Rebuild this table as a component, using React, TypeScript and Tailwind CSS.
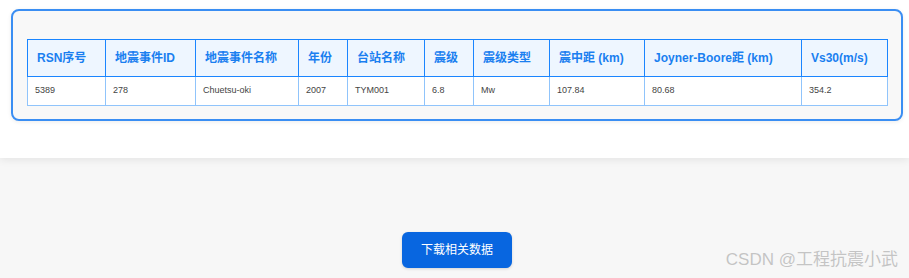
import React from 'react';

const columns = [
  { label: 'RSN序号', w: 78 },
  { label: '地震事件ID', w: 90 },
  { label: '地震事件名称', w: 103 },
  { label: '年份', w: 49 },
  { label: '台站名称', w: 77 },
  { label: '震级', w: 49 },
  { label: '震级类型', w: 76 },
  { label: '震中距 (km)', w: 95 },
  { label: 'Joyner-Boore距 (km)', w: 157 },
  { label: 'Vs30(m/s)', w: 86 },
];

const row = ['5389', '278', 'Chuetsu-oki', '2007', 'TYM001', '6.8', 'Mw', '107.84', '80.68', '354.2'];

const App: React.FC = () => {
  return (
    <div
      className="relative h-[278px] w-[909px] overflow-hidden bg-[#f7f7f7]"
      style={{ fontFamily: '"Liberation Sans", Arial, "Noto Sans CJK SC", sans-serif' }}
    >
      {/* Result panel */}
      <section className="h-[158px] bg-white pt-[9px] pl-[11px] pr-[6px] shadow-[0_2px_8px_rgba(0,0,0,0.08)]">
        <div className="rounded-[8px] border-2 border-[#3a8ef3] bg-[#f8f8f8] pt-[28px] pb-[13px] pl-[14px] pr-[13px] shadow-[0_1px_4px_rgba(0,0,0,0.08)]">
          <table className="w-[860px] table-fixed border-collapse">
            <colgroup>
              {columns.map(c => (
                <col key={c.label} style={{ width: c.w }} />
              ))}
            </colgroup>
            <thead>
              <tr className="h-[37px] bg-[#eef6ff]">
                {columns.map(c => (
                  <th
                    key={c.label}
                    className="border border-[#1a85ff] px-[9px] text-left text-[12px] font-bold whitespace-nowrap text-[#1a7ff0]"
                  >
                    {c.label}
                  </th>
                ))}
              </tr>
            </thead>
            <tbody>
              <tr className="h-[29px] bg-white">
                {row.map((v, i) => (
                  <td
                    key={i}
                    className="border border-[#90c4fb] px-[7px] text-[9px] text-[#444]"
                  >
                    {v}
                  </td>
                ))}
              </tr>
            </tbody>
          </table>
        </div>
      </section>

      {/* Download */}
      <div className="flex justify-center pt-[74px] pl-[5px]">
        <button className="h-[36px] w-[110px] rounded-[6px] bg-[#0866e0] text-[12px] text-white shadow-[0_1px_3px_rgba(0,0,0,0.15)]">
          下载相关数据
        </button>
      </div>

      <div className="absolute right-[11px] bottom-[6px] text-[17px] text-[#c4c4c4] [text-shadow:0_0_1px_#fff]">
        CSDN @工程抗震小武
      </div>
    </div>
  );
};

export default App;
